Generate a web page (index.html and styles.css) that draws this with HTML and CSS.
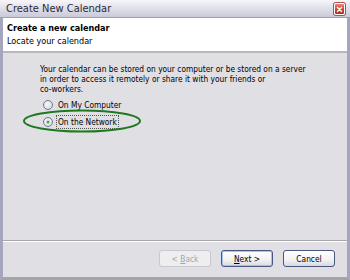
FILE: index.html
```html
<!DOCTYPE html>
<html>
<head>
<meta charset="utf-8">
<link rel="stylesheet" href="styles.css">
</head>
<body>
<div class="window">
  <div class="titlebar">
    <span class="title">Create New Calendar</span>
    <span class="close">
      <svg width="11" height="11" viewBox="0 0 11 11"><path d="M3 3 L8 8 M8 3 L3 8" stroke="#fff" stroke-width="1.6" stroke-linecap="round"/></svg>
    </span>
  </div>
  <div class="header">
    <div class="h-title">Create a new calendar</div>
    <div class="h-sub">Locate your calendar</div>
  </div>
  <div class="content">
    <p class="intro">Your calendar can be stored on your computer or be stored on a server<br>in order to access it remotely or share it with your friends or<br>co-workers.</p>
    <div class="options">
      <label class="radio"><span class="dot"></span><span class="lbl">On My Computer</span></label>
      <label class="radio checked"><span class="dot"></span><span class="lbl focus">On the Network</span></label>
    </div>
    <svg class="ring" width="120" height="24" viewBox="0 0 120 24"><ellipse cx="60" cy="12" rx="58" ry="10.5" fill="none" stroke="#1f7a1f" stroke-width="2"/></svg>
  </div>
  <div class="footer">
    <button class="btn disabled">&lt; <u>B</u>ack</button>
    <button class="btn default"><u>N</u>ext &gt;</button>
    <button class="btn">Cancel</button>
  </div>
</div>
</body>
</html>
```
FILE: styles.css
```css
* { box-sizing: border-box; }
html, body { margin: 0; padding: 0; }
body { width: 350px; height: 280px; overflow: hidden; background: #e0dfe3; font-family: "DejaVu Sans", sans-serif; font-stretch: condensed; font-size: 8.3px; color: #000; }
.window { width: 350px; height: 280px; display: flex; flex-direction: column; border-left: 3px solid #a5a5bd; border-right: 3px solid #a5a5bd; border-bottom: 3px solid #a3a3a8; background: #e0dfe3; }
.titlebar { height: 18px; margin-left: -3px; margin-right: -3px; padding: 0 5px 0 6px; display: flex; align-items: center; justify-content: space-between; background: linear-gradient(#f6f6fa 0%, #e4e4ec 40%, #c9c9d9 100%); border-bottom: 1px solid #a0a0b8; }
.title { font-size: 11px; color: #2a2a3a; }
.close { width: 11px; height: 12px; border-radius: 2px; background: linear-gradient(#e88878, #c8412c 60%, #b0301c); border: 1px solid #fff; box-shadow: 0 0 0 1px #b05050; display: flex; align-items: center; justify-content: center; margin-top: 1px; }
.close svg { display: block; }
.header { height: 35px; background: #fff; padding: 4px 0 0 4px; border-bottom: 2px solid #b8b7bd; }
.h-title { font-weight: bold; font-size: 9px; line-height: 13px; }
.h-sub { font-size: 9px; line-height: 13px; }
.content { flex: 1; position: relative; padding: 11px 0 0 37px; border-bottom: 1px solid #a7a6aa; }
.intro { margin: 0; line-height: 10px; }
.options { margin-top: 5px; margin-left: 3px; display: flex; flex-direction: column; gap: 5px; }
.radio { display: flex; align-items: center; gap: 5px; height: 12px; }
.dot { width: 10px; height: 10px; border-radius: 50%; border: 1px solid #6a7a9c; background: radial-gradient(circle at 40% 40%, #f6f6f6, #d6d6dc); position: relative; }
.checked .dot::after { content: ""; position: absolute; left: 3px; top: 3px; width: 2px; height: 2px; border-radius: 50%; background: #3c9c2c; box-shadow: 0 0 0 0.5px #5cbc4c; }
.focus { outline: 1px dotted #555; outline-offset: 1px; }
.ring { position: absolute; left: 19px; top: 56px; }
.footer { height: 36px; border-top: 1px solid #fff; display: flex; justify-content: flex-end; align-items: center; gap: 10px; padding: 0 12px 2px 0; }
.btn { width: 52px; height: 17px; font-family: inherit; font-stretch: condensed; font-size: 8.3px; padding: 0; border: 1px solid #4a5680; border-radius: 3px; background: linear-gradient(#ffffff, #f2f2f4 60%, #d8d8e0); color: #000; }
.btn.default { box-shadow: inset 0 0 0 1px #a6c2f0; }
.btn.disabled { border-color: #c9c7cf; color: #a4a3a8; background: #eeeef0; }
u { text-decoration: underline; }
```
